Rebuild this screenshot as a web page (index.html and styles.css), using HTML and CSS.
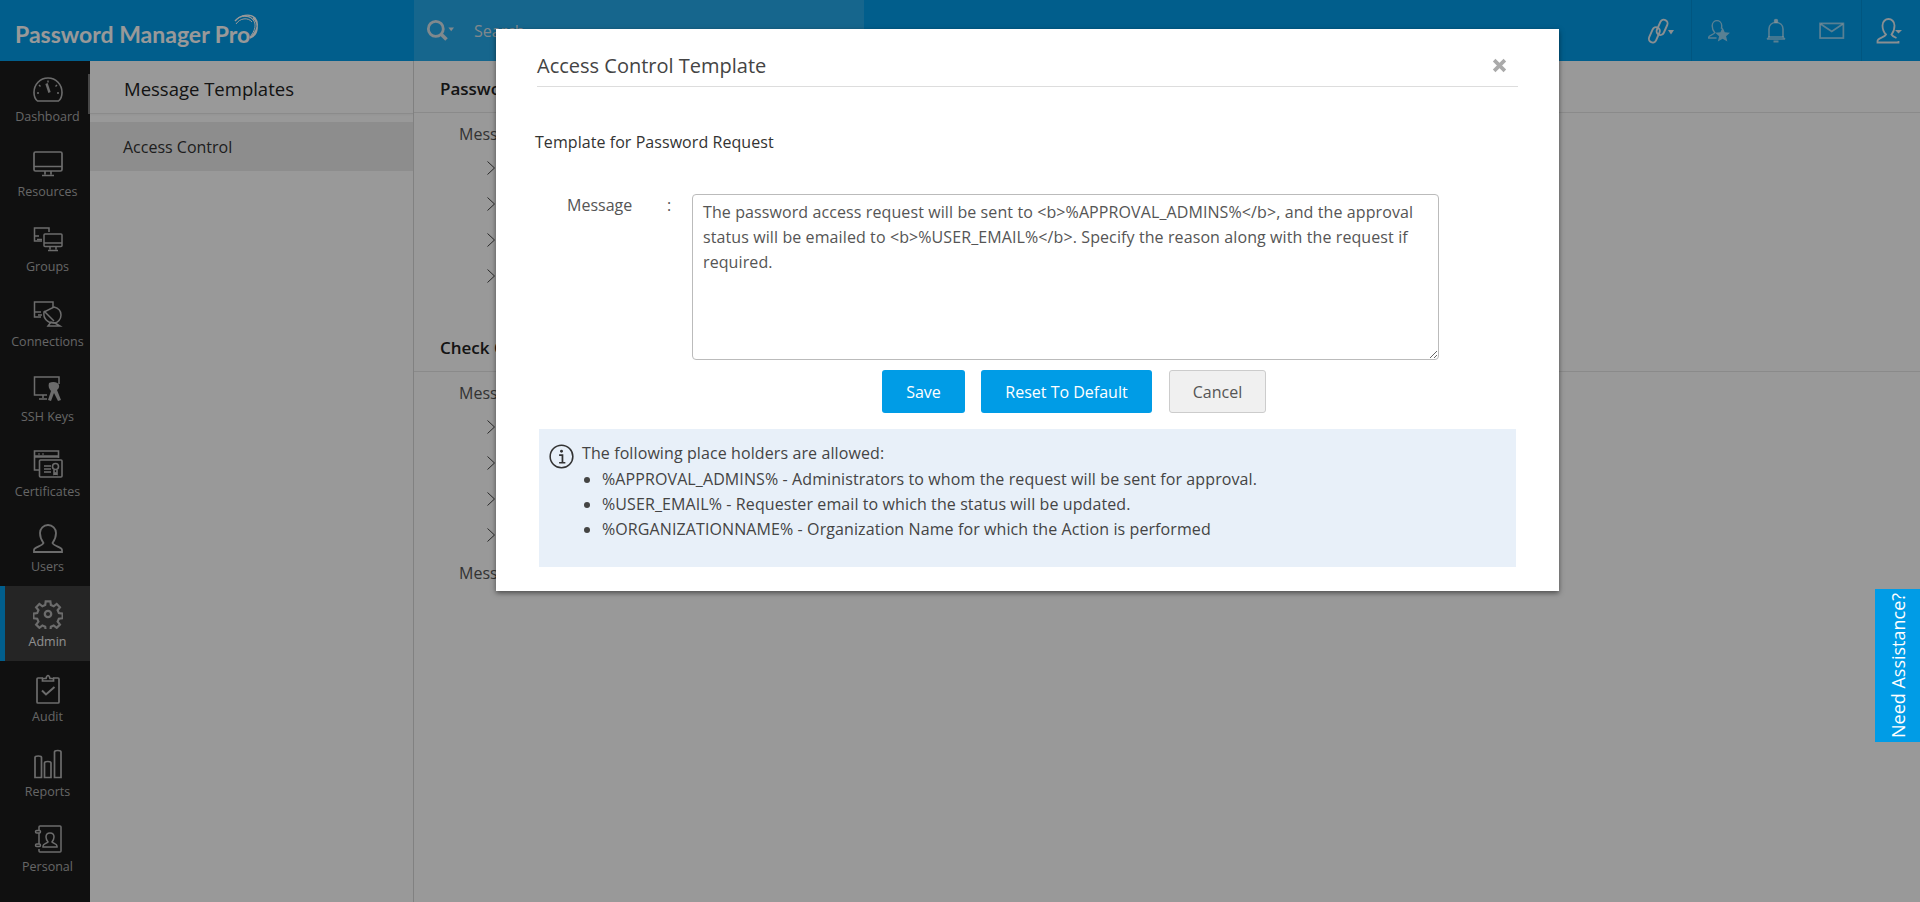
FILE: index.html
```html
<!DOCTYPE html>
<html lang="en">
<head>
<meta charset="utf-8">
<title>Password Manager Pro</title>
<link rel="stylesheet" href="styles.css">
</head>
<body>
<div class="page">
  <header class="topbar">
    <div class="brand">
      <span class="brand-text">Password Manager Pro</span>
      <svg class="brand-arc" viewBox="0 0 26 26" fill="none" stroke="currentColor"><path d="M2 7C7 1 17-1 22 4c4 5 3 13-5 20 9-3 9-16 3-20" stroke-width="1.400"/><path d="M5 4c6-3 13-2 16 3" stroke-width="1"/><path d="M3 10C7 4 15 3 19 8" stroke-width="1"/><path d="M9 2c6-1 12 2 13 8 .5 5-2 9-5 13" stroke-width="1"/></svg>
    </div>
    <div class="search">
      <svg class="search-icon" viewBox="0 0 30 23" fill="none" stroke="currentColor" stroke-width="3"><circle cx="10.500" cy="9.500" r="8"/><path d="M16 15l6 6" stroke-width="3.800"/><path d="M24 8h6l-3 4z" fill="currentColor" stroke="none"/></svg>
      <span class="search-text">Search</span>
    </div>
    <div class="top-icons">
      <div class="top-cell cell-link">
        <svg viewBox="0 0 30 28" fill="none" stroke="currentColor" stroke-width="1.900"><g transform="rotate(24 11 14)"><rect x="5.500" y="11" width="7.500" height="16" rx="3.750"/><rect x="9.500" y="1" width="7.500" height="16" rx="3.750"/></g><path d="M21 13h6l-3 4.500z" fill="currentColor" stroke="none"/></svg>
      </div>
      <div class="top-cell cell-dim">
        <svg viewBox="0 0 30 30" fill="none" stroke="currentColor" stroke-width="1.600"><path d="M2 22c0-2 6-3 7-5-3-3-3-6-3-8 0-4 3-6 5.500-6S17 5 17 9c0 1 0 2-.5 3.500M2 22v1h9"/><path d="M18 11l2.500 5.500 6 .5-4.500 4 1.500 6-5.500-3.200-5.500 3.200 1.500-6-4.500-4 6-.5z" fill="currentColor" stroke="none"/></svg>
      </div>
      <div class="top-cell cell-dim">
        <svg viewBox="0 0 24 26" fill="none" stroke="currentColor" stroke-width="1.600"><circle cx="12" cy="3" r="1.500" fill="currentColor"/><path d="M5 19V11c0-4 3-6.500 7-6.500s7 2.500 7 6.500v8"/><path d="M3 21c1-.5 2-1 2-2h14c0 1 1 1.500 2 2z"/><path d="M9.500 23.500h5" stroke-width="2"/></svg>
      </div>
      <div class="top-cell cell-dim">
        <svg viewBox="0 0 24 18" fill="none" stroke="currentColor" stroke-width="1.600"><rect x="1" y="2" width="21.500" height="13.500"/><path d="M1.500 2.500l10.250 7 10.250-7"/></svg>
      </div>
      <div class="top-cell cell-user">
        <svg viewBox="0 0 30 28" fill="none" stroke="currentColor" stroke-width="1.800"><path d="M1.500 24c0-3 7-3.500 8.500-6.500-3-3-3.500-6-3.500-9C6.500 4.500 9.500 2 12.500 2s6 2.500 6 6.500c0 3-.5 6-3 9 .8 1.700 3 2.700 5 3.500M1.500 24v1.500h21V24"/><path d="M19 13h7l-3.500 3.500z" fill="currentColor" stroke="none"/></svg>
      </div>
    </div>
  </header>

  <div class="workspace">
    <nav class="sidebar">
      <a class="nav-item"><svg class="nav-icon" viewBox="0 0 30 30" fill="none" stroke="currentColor" stroke-width="1.600"><path d="M4.500 27C2 25 1 21.500 1 18.500 1 10.500 7 4 15 4s14 6.500 14 14.500c0 3-1 6.500-3.500 8.500z"/><path d="M13.500 9.500l3 9" stroke-width="2.400"/><path d="M15 6.500v2M6 11l1.500 1.500M24 11l-1.500 1.500M4 19h2M24 19h2" stroke-width="1.400"/></svg><span>Dashboard</span></a>
      <a class="nav-item"><svg class="nav-icon" viewBox="0 0 30 30" fill="none" stroke="currentColor" stroke-width="1.700"><rect x="1" y="3" width="28" height="19" rx="1.500"/><path d="M1 17.500h28M12 22v3.500M18 22v3.500M9 26.500h12"/></svg><span>Resources</span></a>
      <a class="nav-item"><svg class="nav-icon" viewBox="0 0 30 30" fill="none" stroke="currentColor" stroke-width="1.500"><path d="M9 17H1.500V4H16v4"/><path d="M1.500 12H6M4 15.500h5"/><rect x="11" y="10" width="18" height="12.500" rx="1"/><path d="M11 19h18M17 22.500v3M23 22.500v3M15 26.500h10"/></svg><span>Groups</span></a>
      <a class="nav-item"><svg class="nav-icon" viewBox="0 0 30 30" fill="none" stroke="currentColor" stroke-width="1.500"><path d="M8 18H1.500V3H20v6"/><path d="M1.500 13H8M5 16h4"/><path d="M11 13c-1 6 3 11 10 11 4 0 7-4 7-8 0-4-3-7-7-8z"/><path d="M11 12l10 10"/><path d="M15 27l3-4 4 1 5 3z"/></svg><span>Connections</span></a>
      <a class="nav-item"><svg class="nav-icon" viewBox="0 0 30 30" fill="none" stroke="currentColor" stroke-width="1.500"><path d="M14 21H1.500V3H26v7"/><path d="M10 21v3M6 25h8"/><path d="M16 9c4-2 9-1 10 2 .5 2-.5 4-2 5l4 10-3 1-4-8-3 8-3-1 3-9c-2-2-3-5-2-8z" fill="currentColor" stroke="none"/></svg><span>SSH Keys</span></a>
      <a class="nav-item"><svg class="nav-icon" viewBox="0 0 30 30" fill="none" stroke="currentColor" stroke-width="1.600"><path d="M6 21H1.500V2h24v7"/><path d="M1.500 7.500h24" stroke-width="2.500"/><path d="M5 5h2M9 5h2" stroke-width="1.200"/><rect x="6.500" y="11" width="22.500" height="17" rx="1"/><path d="M11 17h7M11 20h7M11 23h7"/><circle cx="22.500" cy="17.500" r="3"/><path d="M21 21v4l1.500-1 1.500 1v-4"/></svg><span>Certificates</span></a>
      <a class="nav-item"><svg class="nav-icon" viewBox="0 0 30 30" fill="none" stroke="currentColor" stroke-width="1.800"><path d="M1 28v-2c0-3 8-3.500 9.500-7C7.500 15 7 11 7 9c0-4.500 3.500-8 8-8s8 3.500 8 8c0 2-.5 6-3.500 10 1.500 3.500 9.500 4 9.500 7v2z"/></svg><span>Users</span></a>
      <a class="nav-item is-active"><svg class="nav-icon" viewBox="0 0 30 30" fill="none" stroke="currentColor" stroke-width="2.300"><circle cx="15" cy="15" r="3.200"/><path d="M12.500 1.500h5l.5 4 3 1.300 3.200-2.500 3.500 3.500-2.500 3.200 1.300 3 4 .5v5l-4 .5-1.300 3 2.500 3.200-3.500 3.500-3.200-2.500-3 1.300-.5 4h-5l-.5-4-3-1.300-3.200 2.500-3.500-3.500 2.500-3.200-1.300-3-4-.5v-5l4-.5 1.300-3-2.500-3.200 3.500-3.500 3.200 2.500 3-1.300z" transform="scale(.94) translate(1 1)"/></svg><span>Admin</span></a>
      <a class="nav-item"><svg class="nav-icon" viewBox="0 0 30 30" fill="none" stroke="currentColor" stroke-width="1.700"><path d="M10 4H5a1 1 0 0 0-1 1v23a1 1 0 0 0 1 1h20a1 1 0 0 0 1-1V5a1 1 0 0 0-1-1h-5"/><path d="M9.500 7V4.500h3.500C13.500 2.500 14 1.500 15 1.500s1.500 1 2 3h3.500V7z"/><path d="M9 16.500l4 4 8.500-7.500" stroke-width="2"/></svg><span>Audit</span></a>
      <a class="nav-item"><svg class="nav-icon" viewBox="0 0 30 30" fill="none" stroke="currentColor" stroke-width="1.700"><path d="M2 28.500V8.500C2 6.500 8.500 6.500 8.500 8.500v20z"/><path d="M11.500 28.500V14c0-2 6.500-2 6.500 0v14.500z"/><path d="M21.500 28.500V3c0-2 6.500-2 6.500 0v25.500z"/></svg><span>Reports</span></a>
      <a class="nav-item"><svg class="nav-icon" viewBox="0 0 30 30" fill="none" stroke="currentColor" stroke-width="1.500"><path d="M6 6V3a1 1 0 0 1 1-1h20a1 1 0 0 1 1 1v24a1 1 0 0 1-1 1H7a1 1 0 0 1-1-1v-2"/><path d="M6 9v11"/><rect x="2.500" y="6.500" width="5" height="2.500" rx="1.200"/><rect x="2.500" y="20" width="5" height="2.500" rx="1.200"/><path d="M10 22c0-2 3.500-2.500 5-4-1.500-2-2-3.500-2-5 0-2.500 1.500-4 4-4s4 1.500 4 4c0 1.500-.5 3-2 5 1.500 1.500 5 2 5 4v1H10z"/></svg><span>Personal</span></a>
      <i class="side-scroll"></i>
    </nav>

    <aside class="subnav">
      <h2 class="subnav-title">Message Templates</h2>
      <div class="subnav-item">Access Control</div>
    </aside>

    <main class="content">
      <section class="tpl-group">
        <h3 class="tpl-head">Password</h3>
        <div class="tpl-msg">Message</div>
        <div class="tpl-row"><svg viewBox="0 0 8 14" fill="none" stroke="currentColor"><path d="M.5.5L7.500 7 .5 13.500"/></svg></div>
        <div class="tpl-row"><svg viewBox="0 0 8 14" fill="none" stroke="currentColor"><path d="M.5.5L7.500 7 .5 13.500"/></svg></div>
        <div class="tpl-row"><svg viewBox="0 0 8 14" fill="none" stroke="currentColor"><path d="M.5.5L7.500 7 .5 13.500"/></svg></div>
        <div class="tpl-row"><svg viewBox="0 0 8 14" fill="none" stroke="currentColor"><path d="M.5.5L7.500 7 .5 13.500"/></svg></div>
      </section>
      <section class="tpl-group">
        <h3 class="tpl-head">Check Out</h3>
        <div class="tpl-msg">Message</div>
        <div class="tpl-row"><svg viewBox="0 0 8 14" fill="none" stroke="currentColor"><path d="M.5.5L7.500 7 .5 13.500"/></svg></div>
        <div class="tpl-row"><svg viewBox="0 0 8 14" fill="none" stroke="currentColor"><path d="M.5.5L7.500 7 .5 13.500"/></svg></div>
        <div class="tpl-row"><svg viewBox="0 0 8 14" fill="none" stroke="currentColor"><path d="M.5.5L7.500 7 .5 13.500"/></svg></div>
        <div class="tpl-row"><svg viewBox="0 0 8 14" fill="none" stroke="currentColor"><path d="M.5.5L7.500 7 .5 13.500"/></svg></div>
        <div class="tpl-msg tpl-msg-last">Message</div>
      </section>
    </main>
  </div>

  <div class="backdrop"></div>

  <div class="modal">
    <div class="modal-head">
      <h1 class="modal-title">Access Control Template</h1>
      <svg class="modal-close" viewBox="0 0 14 14" stroke="currentColor" stroke-width="3.400"><path d="M2 2l10 10M12 2L2 12"/></svg>
    </div>
    <p class="modal-sub">Template for Password Request</p>
    <div class="form-row">
      <label class="form-label" for="msg">Message</label>
      <span class="form-colon">:</span>
      <textarea id="msg" class="form-area" readonly>The password access request will be sent to &lt;b&gt;%APPROVAL_ADMINS%&lt;/b&gt;, and the approval status will be emailed to &lt;b&gt;%USER_EMAIL%&lt;/b&gt;. Specify the reason along with the request if required.</textarea>
    </div>
    <div class="actions">
      <button class="btn btn-save">Save</button>
      <button class="btn btn-reset">Reset To Default</button>
      <button class="btn btn-cancel">Cancel</button>
    </div>
    <div class="info">
      <svg class="info-icon" viewBox="0 0 26 26" fill="none" stroke="currentColor"><circle cx="13" cy="13" r="11.800" stroke-width="1.600"/><circle cx="13" cy="7.500" r="1.500" fill="currentColor" stroke="none"/><path d="M10.500 11.500H14V19M10.500 19.500h6.500" stroke-width="1.800"/></svg>
      <div class="info-body">
        <div class="info-lead">The following place holders are allowed:</div>
        <ul class="info-list">
          <li>%APPROVAL_ADMINS% - Administrators to whom the request will be sent for approval.</li>
          <li>%USER_EMAIL% - Requester email to which the status will be updated.</li>
          <li>%ORGANIZATIONNAME% - Organization Name for which the Action is performed</li>
        </ul>
      </div>
    </div>
  </div>

  <a class="assist">Need Assistance?</a>
</div>
</body>
</html>
```

FILE: styles.css
```css
* { box-sizing: border-box; }
html, body { margin: 0; height: 100%; overflow: hidden; }
body { font-family: "Open Sans", "Noto Sans", sans-serif; background: #fff; color: #555; }
.page { position: relative; height: 902px; display: flex; flex-direction: column; }

.topbar { height: 61px; flex: none; display: flex; background: #039de9; color: #fff; }
.brand { width: 414px; position: relative; padding-left: 15px; line-height: 68px; }
.brand-text { font-family: Lato, "Open Sans", sans-serif; font-weight: 700; font-size: 23px; }
.brand-arc { position: absolute; left: 233px; top: 14px; width: 26px; height: 26px; }
.search { width: 450px; background: rgba(255,255,255,.14); display: flex; align-items: center; padding-left: 12px; }
.search-icon { width: 28px; height: 21.500px; color: #d6e4ec; }
.search-text { margin-left: 20px; font-size: 16px; color: #d5e2ea; }
.top-icons { margin-left: auto; display: flex; }
.top-cell { width: 56px; display: flex; align-items: center; justify-content: center; color: #e6eef3; }
.top-cell svg { width: 26px; height: 26px; }
.cell-dim { color: rgba(255,255,255,.58); }
.cell-link { width: 62px; padding-left: 3px; border-right: 1px solid #0390d6; }
.cell-link svg { width: 30px; height: 28px; }
.cell-user { width: 59px; border-left: 1px solid #0390d6; margin-left: 1px; }
.cell-user svg { width: 30px; height: 28px; }

.workspace { flex: 1; display: flex; min-height: 0; }
.sidebar { width: 90px; flex: none; background: #1c1c1c; position: relative; }
.nav-item { height: 75px; display: flex; flex-direction: column; align-items: center; padding-top: 13px; border-left: 5px solid transparent; font-size: 12.500px; color: #aaa; line-height: 18px; }
.nav-icon { width: 30px; height: 30px; flex: none; margin-bottom: 4px; color: #b4b4b4; }
.is-active { background: #3e3e3e; border-left-color: #039de9; color: #eee; }
.side-scroll { position: absolute; right: 0; top: 13px; width: 2px; height: 40px; background: #777; }

.subnav { width: 324px; flex: none; border-right: 1px solid #d8d8d8; }
.subnav-title { height: 53px; margin: 0 0 8px; padding-left: 34px; font-size: 18.500px; font-weight: 400; line-height: 56px; color: #222; border-bottom: 1px solid #e8e8e8; box-shadow: 0 1px 2px rgba(0,0,0,.04); }
.subnav-item { height: 49px; padding-left: 33px; background: #ececec; line-height: 50px; font-size: 16px; color: #333; }

.content { flex: 1; min-width: 0; }
.tpl-group { margin-bottom: 26px; }
.tpl-head { height: 52px; margin: 0; padding-left: 26px; font-size: 17px; font-weight: 600; line-height: 56px; color: #222; border-bottom: 1px solid #e6e6e6; }
.tpl-msg { margin: 4px 0 0 45px; height: 33px; line-height: 35px; font-size: 16px; color: #555; }
.tpl-msg-last { margin-top: 3px; }
.tpl-row { height: 36px; display: flex; align-items: center; padding-left: 73px; }
.tpl-row svg { width: 8px; height: 14px; color: #444; }

.backdrop { position: absolute; inset: 0; background: rgba(0,0,0,.4); }

.modal { position: absolute; left: 496px; top: 29px; width: 1063px; height: 562px; padding: 0 41px; background: #fff; box-shadow: 0 2px 5px rgba(0,0,0,.5); }
.modal-head { height: 58px; display: flex; align-items: center; justify-content: space-between; border-bottom: 1px solid #ddd; padding-top: 16px; padding-right: 11px; }
.modal-title { margin: 0; font-size: 20px; font-weight: 400; color: #444; line-height: 26px; }
.modal-close { width: 15px; height: 15px; color: #aaa; }
.modal-sub { margin: 43px 0 0 -2px; font-size: 16px; line-height: 24px; letter-spacing: .06px; color: #333; }
.form-row { display: flex; margin: 40px 0 0 30px; }
.form-label { width: 100px; font-size: 16px; line-height: 22px; color: #555; }
.form-colon { width: 25px; font-size: 16px; line-height: 22px; }
.form-area { display: block; width: 747px; height: 166px; padding: 5px 10px; border: 1px solid #bbb; border-radius: 4px; font: 16px/25px "Open Sans", sans-serif; letter-spacing: .1px; color: #555; background: #fff; outline: 0; resize: both; overflow: hidden; }
.actions { display: flex; gap: 16px; margin: 10px 0 0 345px; }
.btn { height: 43px; padding: 0; border: 0; border-radius: 3px; font: 16px "Open Sans", sans-serif; color: #fff; background: #009ce6; }
.btn-save { width: 83px; }
.btn-reset { width: 171px; }
.btn-cancel { width: 97px; margin-left: 1px; background: #f0f0f0; border: 1px solid #ccc; color: #555; }
.info { display: flex; width: 977px; height: 138px; margin: 16px 0 0 2px; padding: 12px 0 0 10px; background: #e8f0f9; color: #444; font-size: 16px; line-height: 25px; letter-spacing: .1px; }
.info-icon { width: 25px; height: 25px; flex: none; margin: 3px 8px 0 0; color: #333; }
.info-lead { margin-bottom: 1px; }
.info-list { margin: 0; padding-left: 20px; }

.assist { position: absolute; right: 0; top: 589px; width: 45px; height: 153px; display: flex; align-items: center; justify-content: center; background: #009ce6; color: #fff; font-size: 18px; writing-mode: vertical-rl; transform: rotate(180deg); }
```
